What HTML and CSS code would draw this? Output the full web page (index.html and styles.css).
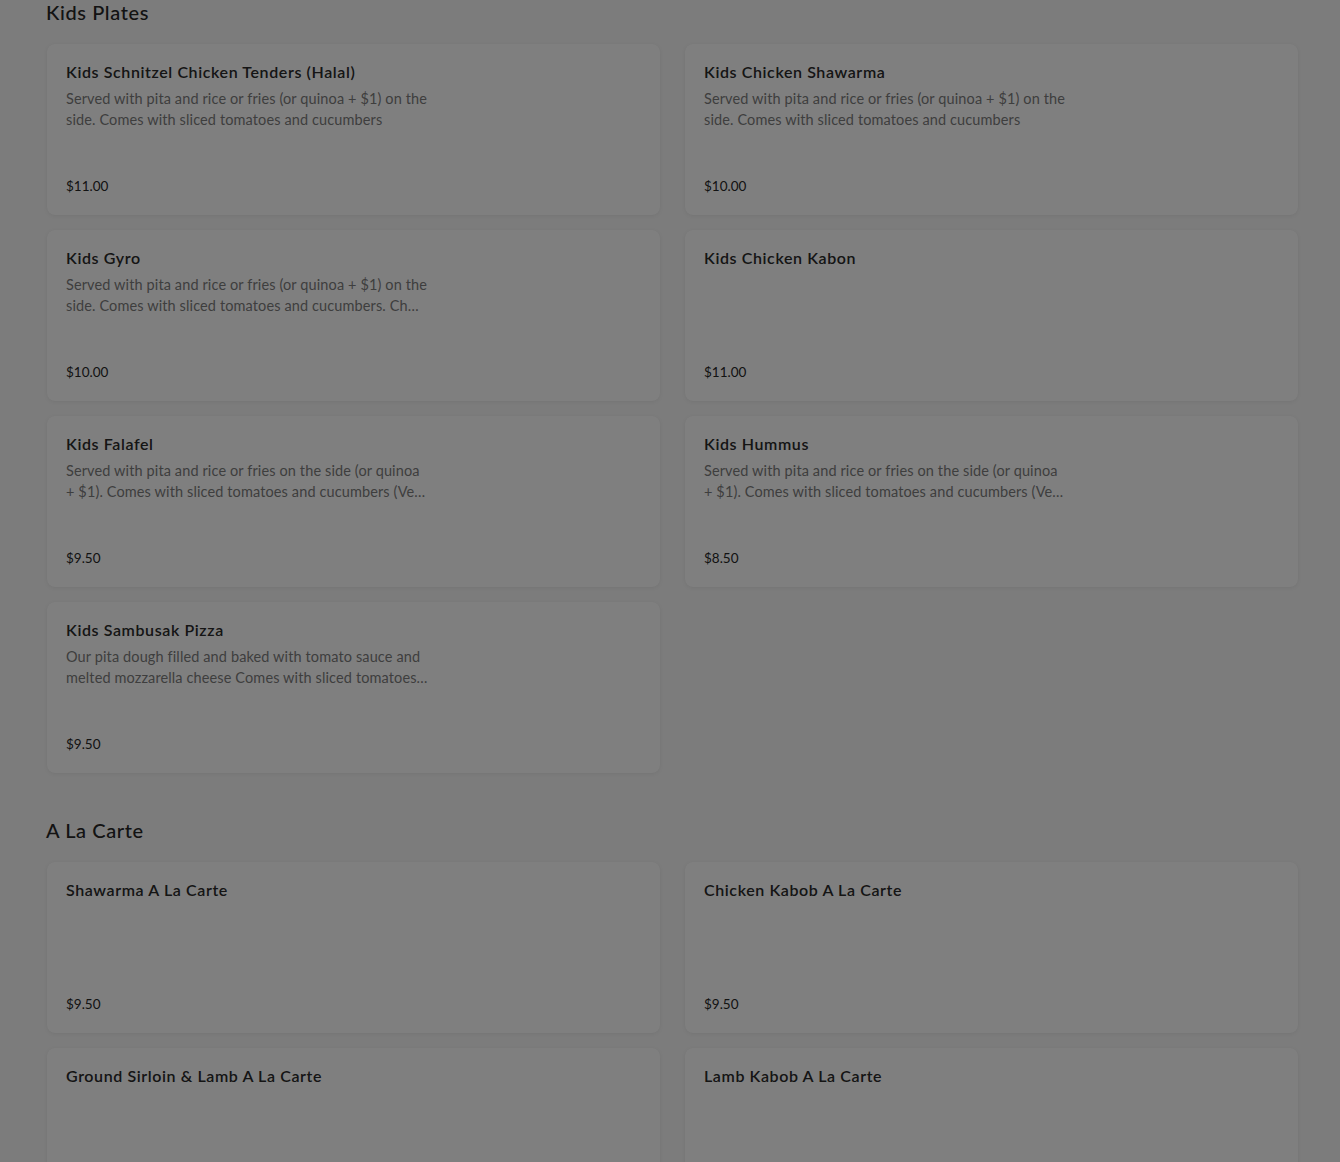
FILE: index.html
```html
<!DOCTYPE html>
<html lang="en">
<head>
<meta charset="utf-8">
<title>Menu</title>
<link rel="stylesheet" href="styles.css">
</head>
<body>
<main class="menu">
  <section class="section">
    <h2 class="section-title">Kids Plates</h2>
    <div class="grid">
      <div class="card">
        <h3 class="item-name">Kids Schnitzel Chicken Tenders (Halal)</h3>
        <p class="item-desc">Served with pita and rice or fries (or quinoa + $1) on the side. Comes with sliced tomatoes and cucumbers</p>
        <div class="item-price">$11.00</div>
      </div>
      <div class="card">
        <h3 class="item-name">Kids Chicken Shawarma</h3>
        <p class="item-desc">Served with pita and rice or fries (or quinoa + $1) on the side. Comes with sliced tomatoes and cucumbers</p>
        <div class="item-price">$10.00</div>
      </div>
      <div class="card">
        <h3 class="item-name">Kids Gyro</h3>
        <p class="item-desc">Served with pita and rice or fries (or quinoa + $1) on the side. Comes with sliced tomatoes and cucumbers. Ch&#8203;oice of beef or chicken</p>
        <div class="item-price">$10.00</div>
      </div>
      <div class="card">
        <h3 class="item-name">Kids Chicken Kabon</h3>
        <div class="item-price">$11.00</div>
      </div>
      <div class="card">
        <h3 class="item-name">Kids Falafel</h3>
        <p class="item-desc">Served with pita and rice or fries on the side (or quinoa + $1). Comes with sliced tomatoes and cucumbers (Ve&#8203;gan)</p>
        <div class="item-price">$9.50</div>
      </div>
      <div class="card">
        <h3 class="item-name">Kids Hummus</h3>
        <p class="item-desc">Served with pita and rice or fries on the side (or quinoa + $1). Comes with sliced tomatoes and cucumbers (Ve&#8203;gan)</p>
        <div class="item-price">$8.50</div>
      </div>
      <div class="card">
        <h3 class="item-name">Kids Sambusak Pizza</h3>
        <p class="item-desc">Our pita dough filled and baked with tomato sauce and melted mozzarella cheese Comes with sliced tomatoe&#8203;s and cucumbers</p>
        <div class="item-price">$9.50</div>
      </div>
    </div>
  </section>
  <section class="section">
    <h2 class="section-title">A La Carte</h2>
    <div class="grid">
      <div class="card">
        <h3 class="item-name">Shawarma A La Carte</h3>
        <div class="item-price">$9.50</div>
      </div>
      <div class="card">
        <h3 class="item-name">Chicken Kabob A La Carte</h3>
        <div class="item-price">$9.50</div>
      </div>
      <div class="card">
        <h3 class="item-name">Ground Sirloin &amp; Lamb A La Carte</h3>
        <div class="item-price">$9.50</div>
      </div>
      <div class="card">
        <h3 class="item-name">Lamb Kabob A La Carte</h3>
        <div class="item-price">$9.50</div>
      </div>
    </div>
  </section>
</main>
<div class="overlay"></div>
</body>
</html>
```

FILE: styles.css
```css
html, body {
  margin: 0;
  padding: 0;
}

body {
  background: #f8f8f8;
  font-family: "Lato", "Liberation Sans", sans-serif;
  color: #222;
  overflow: hidden;
  height: 1162px;
}

.menu {
  margin-top: -2px;
  padding: 0 42px 0 47px;
}

.section + .section {
  margin-top: 43px;
}

.section-title {
  margin: 0 0 18px -1px;
  font-size: 20px;
  line-height: 28px;
  font-weight: 500;
  color: #262626;
  letter-spacing: 0.6px;
}

.grid {
  display: grid;
  grid-template-columns: 613px 613px;
  column-gap: 25px;
  row-gap: 15px;
}

.card {
  background: #ffffff;
  border-radius: 8px;
  box-shadow: 0 1px 4px rgba(0, 0, 0, 0.06), 0 0 1px rgba(0, 0, 0, 0.05);
  height: 171px;
  box-sizing: border-box;
  padding: 18px 19px 19px;
  display: flex;
  flex-direction: column;
}

.item-name {
  margin: 0;
  font-size: 16px;
  line-height: 20px;
  font-weight: 600;
  color: #2a2a2a;
  letter-spacing: 0.6px;
}

.item-desc {
  margin: 6px 0 0;
  max-width: 363px;
  font-size: 14.5px;
  line-height: 21px;
  letter-spacing: 0.12px;
  color: #7d7d7d;
  display: -webkit-box;
  -webkit-line-clamp: 2;
  -webkit-box-orient: vertical;
  overflow: hidden;
}

.item-price {
  margin-top: auto;
  font-size: 13.5px;
  line-height: 20px;
  color: #262626;
}

.overlay {
  position: fixed;
  inset: 0;
  background: rgba(0, 0, 0, 0.5);
}
```
